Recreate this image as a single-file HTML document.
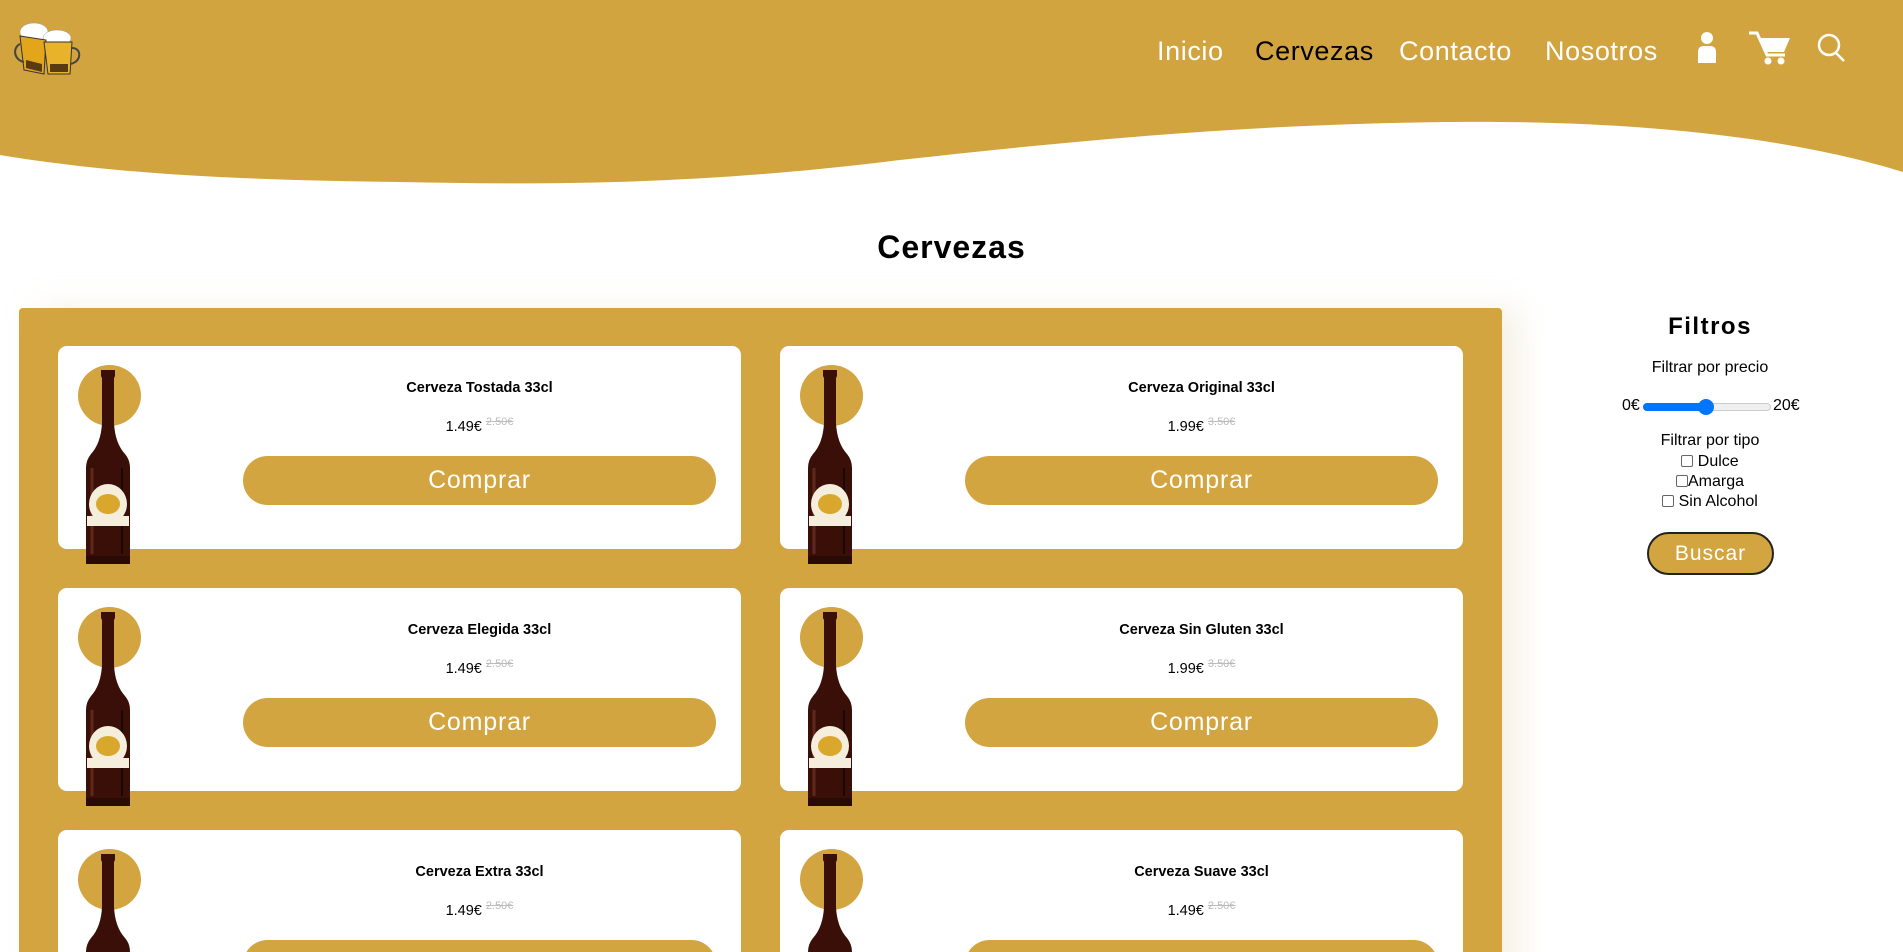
<!DOCTYPE html>
<html><head><meta charset="utf-8"><style>
*{margin:0;padding:0;box-sizing:border-box}
html,body{width:1903px;height:952px;overflow:hidden;background:#fff}
body{font-family:"Liberation Sans",sans-serif}
#w{position:relative;width:1903px;height:952px;overflow:hidden}
.abs{position:absolute}
.nav{position:absolute;top:36px;font-size:27px;color:#fff;letter-spacing:0.6px;white-space:nowrap}
.cont{position:absolute;left:19px;top:308px;width:1483px;height:700px;background:#D3A540;border-radius:4px;box-shadow:18px 0 30px rgba(230,215,180,0.35)}
.card{position:absolute;width:683px;height:203px;background:#fff;border-radius:9px}
.circ{position:absolute;left:20px;top:19px;width:63px;height:61px;border-radius:50%;background:#D3A540}
.bot{position:absolute;left:24px;top:22px;width:52px;height:198px}
.t{position:absolute;left:185px;width:473px;text-align:center;top:34px;font-weight:bold;font-size:14.5px;color:#000}
.p{position:absolute;left:185px;width:473px;text-align:center;top:70px;font-size:14.5px;color:#000}
.p s{color:#bbb;font-size:11px;vertical-align:6px}
.b{position:absolute;left:185px;width:473px;top:110px;height:49px;border-radius:25px;background:#D3A540;color:#fff;font-size:25px;text-align:center;line-height:49px;letter-spacing:0.8px}
.f{position:absolute;left:1560px;width:300px;text-align:center;font-size:16px;color:#000}
</style></head><body><div id="w">
<svg class="abs" style="left:0;top:0" width="1903" height="190" viewBox="0 0 1903 190">
<path d="M0 0H1903V172C1800 140 1650 120 1450 122C1250 124 1080 140 900 160C700 185 550 185 400 182C250 180 120 175 0 155Z" fill="#D2A43F"/>
</svg>
<svg class="abs" style="left:12px;top:18px" width="70" height="60" viewBox="0 0 70 60">
<ellipse cx="22" cy="14" rx="14" ry="9" fill="#fff" stroke="#999" stroke-width=".5"/>
<ellipse cx="45" cy="20" rx="14" ry="8" fill="#fff" stroke="#999" stroke-width=".5"/>
<path d="M8 18L34 22L32 56L12 52Z" fill="#E3A61A" stroke="#333"/>
<path d="M32 24L60 24L58 56L36 56Z" fill="#E8B22A" stroke="#333"/>
<path d="M8 26C0 30 2 42 12 44M60 30C70 30 70 44 58 46" stroke="#444" stroke-width="2" fill="none"/>
<path d="M14 42L30 46L30 54L14 50ZM38 46L56 46L56 54L38 54Z" fill="#5a3a10"/>
</svg>
<span class="nav" style="left:1157px">Inicio</span>
<span class="nav" style="left:1255px;color:#000">Cervezas</span>
<span class="nav" style="left:1399px">Contacto</span>
<span class="nav" style="left:1545px">Nosotros</span>
<svg class="abs" style="left:1696px;top:30px" width="22" height="34" viewBox="0 0 22 34"><circle cx="11" cy="8" r="6" fill="#fff"/><path d="M2 22Q2 16 8 16H14Q20 16 20 22V33H2Z" fill="#fff"/></svg>
<svg class="abs" style="left:1748px;top:30px" width="44" height="36" viewBox="0 0 44 36"><path d="M1 3H9L19 25H37" stroke="#fff" stroke-width="3" fill="none"/><path d="M10 8H42L36 22H17Z" fill="#fff"/><circle cx="20" cy="31" r="3.5" fill="#fff"/><circle cx="33" cy="31" r="3.5" fill="#fff"/></svg>
<svg class="abs" style="left:1816px;top:33px" width="32" height="32" viewBox="0 0 32 32"><circle cx="13" cy="12" r="10" stroke="#fff" stroke-width="2.5" fill="none"/><path d="M20 20L28 28" stroke="#fff" stroke-width="2.5"/></svg>
<div class="abs" style="left:0;width:1903px;top:229px;text-align:center;font-size:32px;font-weight:bold;letter-spacing:1px;color:#000">Cervezas</div>
<div class="cont"></div>
<svg width="0" height="0" style="position:absolute"><defs>
<symbol id="bt" viewBox="0 0 52 198"><path d="M19 2H33V8L32 10V55Q33 75 43 86Q48 92 48 100V188Q48 196 42 196H10Q4 196 4 188V100Q4 92 9 86Q19 75 20 55V10L19 8Z" fill="#3a0f08"/><path d="M10 100V186" stroke="#7a3a26" stroke-width="3" opacity=".6"/><path d="M40 100V186" stroke="#1a0602" stroke-width="2"/><ellipse cx="26" cy="136" rx="19" ry="20" fill="#f5eedc"/><ellipse cx="26" cy="136" rx="12" ry="10" fill="#d9a72c"/><rect x="5" y="148" width="42" height="10" fill="#f5eedc"/><rect x="4" y="188" width="44" height="8" fill="#2a0a04"/></symbol></defs></svg>
<div class="card" style="left:58px;top:346px"><div class="circ"></div><svg class="bot"><use href="#bt"/></svg><div class="t">Cerveza Tostada 33cl</div><div class="p">1.49€ <s>2.50€</s></div><div class="b">Comprar</div></div>
<div class="card" style="left:780px;top:346px"><div class="circ"></div><svg class="bot"><use href="#bt"/></svg><div class="t">Cerveza Original 33cl</div><div class="p">1.99€ <s>3.50€</s></div><div class="b">Comprar</div></div>
<div class="card" style="left:58px;top:588px"><div class="circ"></div><svg class="bot"><use href="#bt"/></svg><div class="t">Cerveza Elegida 33cl</div><div class="p">1.49€ <s>2.50€</s></div><div class="b">Comprar</div></div>
<div class="card" style="left:780px;top:588px"><div class="circ"></div><svg class="bot"><use href="#bt"/></svg><div class="t">Cerveza Sin Gluten 33cl</div><div class="p">1.99€ <s>3.50€</s></div><div class="b">Comprar</div></div>
<div class="card" style="left:58px;top:830px"><div class="circ"></div><svg class="bot"><use href="#bt"/></svg><div class="t">Cerveza Extra 33cl</div><div class="p">1.49€ <s>2.50€</s></div><div class="b">Comprar</div></div>
<div class="card" style="left:780px;top:830px"><div class="circ"></div><svg class="bot"><use href="#bt"/></svg><div class="t">Cerveza Suave 33cl</div><div class="p">1.49€ <s>2.50€</s></div><div class="b">Comprar</div></div>
<div class="f" style="top:313px;font-size:24px;font-weight:bold;letter-spacing:1.5px">Filtros</div>
<div class="f" style="top:359px">Filtrar por precio</div>
<div class="f" style="top:397px;height:20px">
<span class="abs" style="left:62px;top:0">0€</span>
<div class="abs" style="left:83px;top:6px;width:128px;height:8px;border-radius:4px;background:#efefef;border:1px solid #ccc"></div>
<div class="abs" style="left:83px;top:6px;width:63px;height:8px;border-radius:4px;background:#0075ff"></div>
<div class="abs" style="left:138px;top:2px;width:16px;height:16px;border-radius:50%;background:#0075ff"></div>
<span class="abs" style="left:213px;top:0">20€</span></div>
<div class="f" style="top:432px">Filtrar por tipo</div>
<div class="f" style="top:452px;line-height:20px">
<div><span style="display:inline-block;width:12px;height:12px;border:1px solid #666;border-radius:2px;vertical-align:-1px"></span> Dulce</div>
<div><span style="display:inline-block;width:12px;height:12px;border:1px solid #666;border-radius:2px;vertical-align:-1px"></span>Amarga</div>
<div><span style="display:inline-block;width:12px;height:12px;border:1px solid #666;border-radius:2px;vertical-align:-1px"></span> Sin Alcohol</div></div>
<div class="abs" style="left:1647px;top:532px;width:127px;height:43px;border:2px solid #222;border-radius:22px;background:#D3A540;color:#fff;font-size:21px;text-align:center;line-height:39px;letter-spacing:1px">Buscar</div>
</div></body></html>
